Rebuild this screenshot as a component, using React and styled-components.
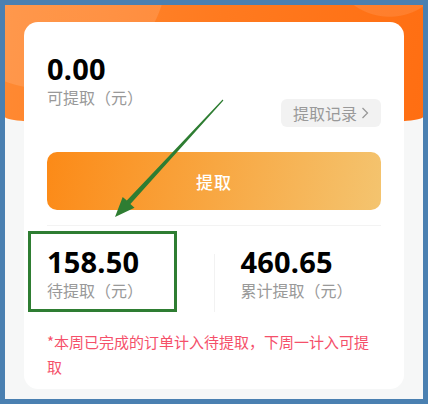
import React from "react"
import styled, { createGlobalStyle } from "styled-components"

const Global = createGlobalStyle`
  html, body { margin: 0; padding: 0; }
  body {
    font-family: "Noto Sans CJK SC", "Noto Sans", sans-serif;
  }
`

const Frame = styled.div`
  width: 428px;
  height: 404px;
  box-sizing: border-box;
  border: 5px solid #4a80b1;
  background: #f6f7f7;
  position: relative;
  overflow: hidden;
  &::before {
    content: "";
    position: absolute;
    left: 0;
    top: 0;
    right: 0;
    height: 122px;
    border-radius: 0 0 50% 50% / 0 0 10px 10px;
    background:
      radial-gradient(circle at 10% -30%, rgba(255, 255, 255, 0.12) 0 120px, transparent 121px),
      radial-gradient(circle at 92% -40%, rgba(255, 255, 255, 0.1) 0 60px, transparent 61px),
      linear-gradient(100deg, #ff8a33 0%, #ff7a1f 50%, #ff6e12 100%);
  }
`

const Card = styled.div`
  position: relative;
  margin: 17px 19px 0;
  height: 367px;
  box-sizing: border-box;
  background: #fff;
  border-radius: 14px;
  padding: 31px 23px 0;
`

const Top = styled.div`
  display: flex;
  justify-content: space-between;
  align-items: flex-start;
`

const Stat = styled.div`
  display: flex;
  flex-direction: column;
`

const Amount = styled.div`
  font-family: "Noto Sans", sans-serif;
  font-weight: 700;
  font-size: 29px;
  line-height: 32px;
  color: #000;
  letter-spacing: 0.2px;
`

const Label = styled.div`
  font-size: 16px;
  line-height: 24px;
  color: #999;
`

const RecordButton = styled.div`
  margin-top: 46px;
  height: 28px;
  width: 100px;
  border-radius: 6px;
  background: #f2f2f2;
  color: #999;
  font-size: 16px;
  display: flex;
  align-items: center;
  justify-content: center;
  gap: 4px;
`

const WithdrawButton = styled.div`
  margin-top: 25px;
  height: 58px;
  border-radius: 10px;
  background: linear-gradient(100deg, #fc8a17 0%, #f8a742 50%, #f4c46f 100%);
  color: #fff;
  font-size: 17px;
  font-weight: 500;
  display: flex;
  align-items: center;
  justify-content: center;
  letter-spacing: 1px;
`

const Divider = styled.div`
  margin-top: 15px;
  height: 1px;
  background: #f3f3f3;
`

const Stats = styled.div`
  display: grid;
  grid-template-columns: 1fr 1px 1fr;
  padding-top: 20px;
`

const StatCell = styled(Stat)`
  padding-left: ${p => p.$pad || 0}px;
`

const VLine = styled.div`
  background: #f2f2f2;
  margin-top: 8px;
  height: 58px;
`

const Note = styled.div`
  margin-top: 17px;
  color: #f5506a;
  font-size: 15px;
  line-height: 25px;
`

const Overlay = styled.svg`
  position: absolute;
  left: -5px;
  top: -5px;
  width: 428px;
  height: 404px;
  pointer-events: none;
`

const Chevron = () => (
  <svg width="8" height="12" viewBox="0 0 8 12">
    <path d="M1.5 1l5 5-5 5" fill="none" stroke="#999" strokeWidth="1.3" />
  </svg>
)

export default function App() {
  return (
    <>
      <Global />
      <Frame>
        <Card>
          <Top>
            <Stat>
              <Amount>0.00</Amount>
              <Label>可提取（元）</Label>
            </Stat>
            <RecordButton>
              提取记录 <Chevron />
            </RecordButton>
          </Top>
          <WithdrawButton>提取</WithdrawButton>
          <Divider />
          <Stats>
            <StatCell>
              <Amount>158.50</Amount>
              <Label>待提取（元）</Label>
            </StatCell>
            <VLine />
            <StatCell $pad={26}>
              <Amount>460.65</Amount>
              <Label>累计提取（元）</Label>
            </StatCell>
          </Stats>
          <Note>*本周已完成的订单计入待提取，下周一计入可提取</Note>
        </Card>
        <Overlay viewBox="0 0 428 404">
          <rect x="29.5" y="232.5" width="146" height="78" fill="none" stroke="#2e7d32" strokeWidth="3" />
          <polygon
            points="223.4,100.4 130.4,204 134.5,207.7 115,217 122.7,196.9 126.8,200.6 222.6,99.6"
            fill="#2e7d32"
          />
        </Overlay>
      </Frame>
    </>
  )
}
